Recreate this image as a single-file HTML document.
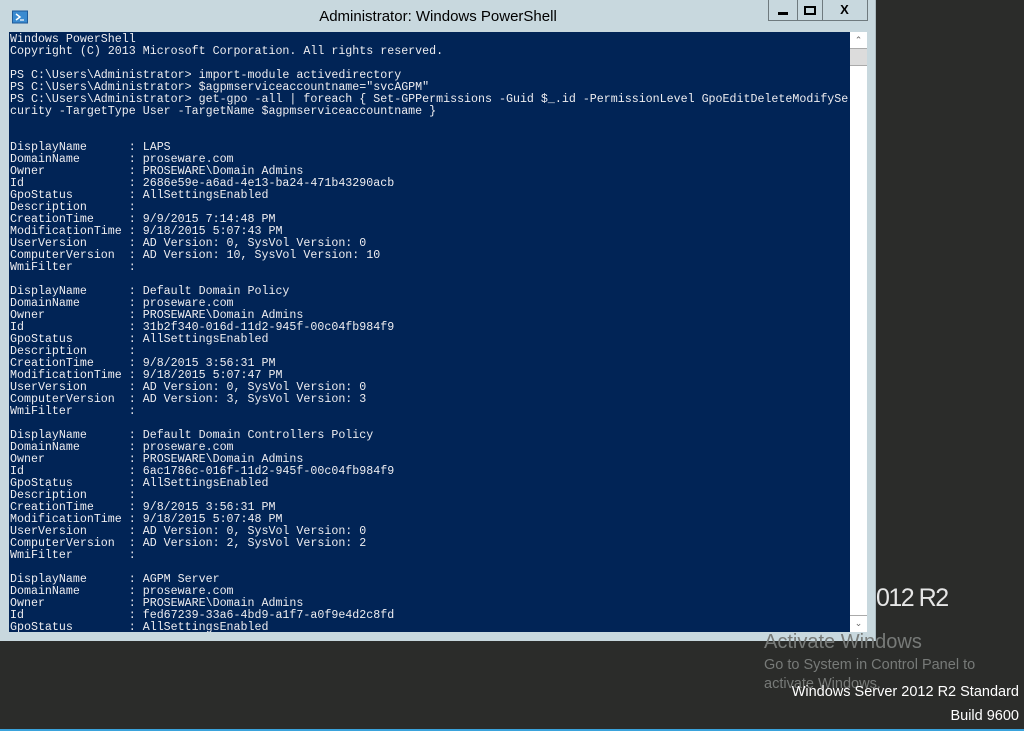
<!DOCTYPE html>
<html><head><style>
body{margin:0;width:1024px;height:731px;background:#2b2c2a;position:relative;overflow:hidden;font-family:"Liberation Sans",sans-serif}
#win{position:absolute;left:0;top:0;width:876px;height:641px;background:#c8d8de;border-right:1px solid #aab9bf;box-sizing:border-box}
#title{position:absolute;left:0;top:8px;width:876px;text-align:center;font-size:15px;color:#000}
.btn{position:absolute;top:0;height:21px;border:1px solid #6f7a7e;border-top:none;box-sizing:border-box}
#con{position:absolute;left:9px;top:32px;width:841px;height:600px;background:#012456;overflow:hidden}
pre{margin:0;font-family:"Liberation Mono",monospace;font-size:11.65px;line-height:12px;color:#eeedf0;padding:2px 0 0 1px}
#sb{position:absolute;left:850px;top:32px;width:17px;height:600px;background:#fff}
.ov{position:absolute;color:#777a78}
</style></head><body>
<div id="win">
<svg style="position:absolute;left:12px;top:9px" width="16" height="16"><rect x="0.5" y="2" width="15" height="12" fill="#3b8bd0" stroke="#1e5a9a"/><path d="M4 5 L8 8 L4 11" stroke="#fff" stroke-width="1.5" fill="none"/><path d="M8 11 H12" stroke="#fff" stroke-width="1.2"/></svg>
<div id="title">Administrator: Windows PowerShell</div>
<div class="btn" style="left:768px;width:30px"><div style="position:absolute;left:9px;top:12px;width:10px;height:3px;background:#000"></div></div>
<div class="btn" style="left:797px;width:26px;border-left:none"><div style="position:absolute;left:7px;top:6px;width:8px;height:5px;border:2px solid #000"></div></div>
<div class="btn" style="left:822px;width:46px;border-left:none;font-weight:bold;font-size:13px;text-align:center;line-height:20px">X</div>
<div id="con"><pre>Windows PowerShell
Copyright (C) 2013 Microsoft Corporation. All rights reserved.

PS C:\Users\Administrator&gt; import-module activedirectory
PS C:\Users\Administrator&gt; $agpmserviceaccountname="svcAGPM"
PS C:\Users\Administrator&gt; get-gpo -all | foreach { Set-GPPermissions -Guid $_.id -PermissionLevel GpoEditDeleteModifySe
curity -TargetType User -TargetName $agpmserviceaccountname }


DisplayName      : LAPS
DomainName       : proseware.com
Owner            : PROSEWARE\Domain Admins
Id               : 2686e59e-a6ad-4e13-ba24-471b43290acb
GpoStatus        : AllSettingsEnabled
Description      :
CreationTime     : 9/9/2015 7:14:48 PM
ModificationTime : 9/18/2015 5:07:43 PM
UserVersion      : AD Version: 0, SysVol Version: 0
ComputerVersion  : AD Version: 10, SysVol Version: 10
WmiFilter        :

DisplayName      : Default Domain Policy
DomainName       : proseware.com
Owner            : PROSEWARE\Domain Admins
Id               : 31b2f340-016d-11d2-945f-00c04fb984f9
GpoStatus        : AllSettingsEnabled
Description      :
CreationTime     : 9/8/2015 3:56:31 PM
ModificationTime : 9/18/2015 5:07:47 PM
UserVersion      : AD Version: 0, SysVol Version: 0
ComputerVersion  : AD Version: 3, SysVol Version: 3
WmiFilter        :

DisplayName      : Default Domain Controllers Policy
DomainName       : proseware.com
Owner            : PROSEWARE\Domain Admins
Id               : 6ac1786c-016f-11d2-945f-00c04fb984f9
GpoStatus        : AllSettingsEnabled
Description      :
CreationTime     : 9/8/2015 3:56:31 PM
ModificationTime : 9/18/2015 5:07:48 PM
UserVersion      : AD Version: 0, SysVol Version: 0
ComputerVersion  : AD Version: 2, SysVol Version: 2
WmiFilter        :

DisplayName      : AGPM Server
DomainName       : proseware.com
Owner            : PROSEWARE\Domain Admins
Id               : fed67239-33a6-4bd9-a1f7-a0f9e4d2c8fd
GpoStatus        : AllSettingsEnabled</pre></div>
<div id="sb">
<div style="position:absolute;left:0;top:0;width:17px;height:17px;border-bottom:1px solid #aaa;box-sizing:border-box;text-align:center;font-size:9px;color:#666;line-height:17px">&#8963;</div>
<div style="position:absolute;left:0;top:17px;width:17px;height:17px;background:#dcdcdc;border-bottom:1px solid #aaa;box-sizing:border-box"></div>
<div style="position:absolute;left:0;top:583px;width:17px;height:17px;border-top:1px solid #aaa;box-sizing:border-box;text-align:center;font-size:9px;color:#666;line-height:14px">&#8964;</div>
</div>
</div>
<div style="position:absolute;left:876px;top:584px;font-size:25px;color:#e6e6e6;letter-spacing:-1.5px">012 R2</div>
<div class="ov" style="left:764px;top:631px;font-size:20px">Activate Windows</div>
<div class="ov" style="left:764px;top:657px;font-size:14.5px">Go to System in Control Panel to</div>
<div class="ov" style="left:764px;top:676px;font-size:14.5px">activate Windows.</div>
<div style="position:absolute;right:5px;top:684px;font-size:14.5px;color:#fff">Windows Server 2012 R2 Standard</div>
<div style="position:absolute;right:5px;top:708px;font-size:14.5px;color:#fff">Build 9600</div>
<div style="position:absolute;left:0;top:729px;width:1024px;height:2px;background:#3aa3dc"></div>
</body></html>
